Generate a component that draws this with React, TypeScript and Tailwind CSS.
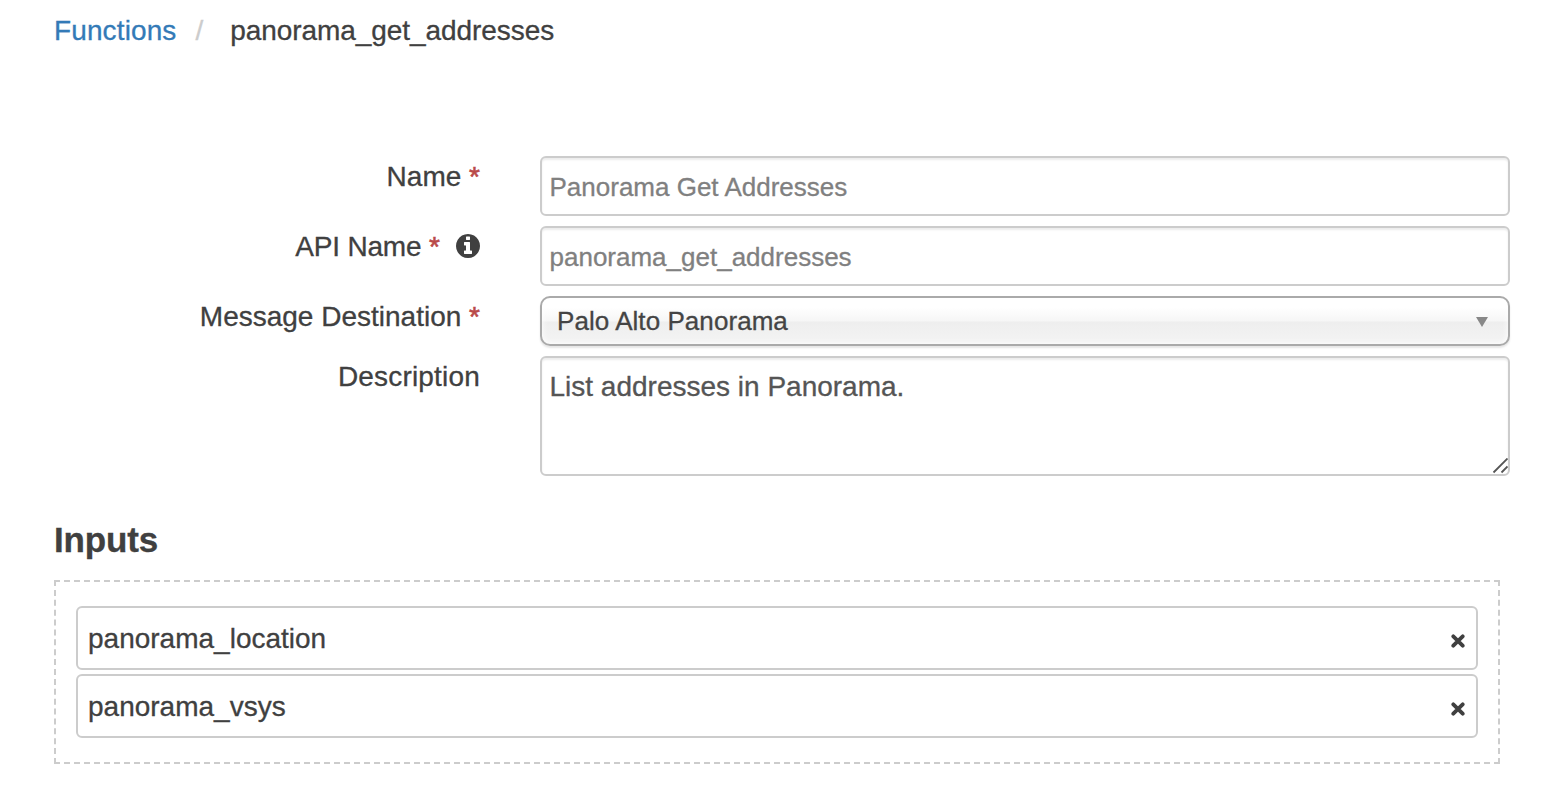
import type { ReactNode } from 'react';

function Required() {
  return <span className="text-[#b94a48] [-webkit-text-stroke:0.6px]">*</span>;
}

function InfoIcon() {
  return (
    <svg className="relative -top-px ml-4 size-6 shrink-0" viewBox="128 128 1536 1536" fill="currentColor" aria-hidden="true">
      <path d="M1152 1376v-160q0-14-9-23t-23-9h-96v-512q0-14-9-23t-23-9h-320q-14 0-23 9t-9 23v160q0 14 9 23t23 9h96v320h-96q-14 0-23 9t-9 23v160q0 14 9 23t23 9h448q14 0 23-9t9-23zm-128-896v-160q0-14-9-23t-23-9h-192q-14 0-23 9t-9 23v160q0 14 9 23t23 9h192q14 0 23-9t9-23zm640 416q0 209-103 385.5t-279.5 279.5-385.5 103-385.5-103-279.5-279.5-103-385.5 103-385.5 279.5-279.5 385.5-103 385.5 103 279.5 279.5 103 385.5z" />
    </svg>
  );
}

function RemoveIcon() {
  return (
    <svg className="size-3.5" viewBox="0 0 14 14" fill="none" stroke="currentColor" strokeWidth="3.8" strokeLinecap="round" aria-hidden="true">
      <path d="M2.3 2.3L11.7 11.7M11.7 2.3L2.3 11.7" />
    </svg>
  );
}

interface RowProps {
  label: string;
  labelClass?: string;
  required?: boolean;
  info?: boolean;
  children: ReactNode;
}

function Row({ label, labelClass = '', required, info, children }: RowProps) {
  return (
    <div className="flex items-start">
      <div className="mr-[60px] flex w-[426px] items-center justify-end pt-px leading-10">
        <span className="whitespace-pre">
          <span className={labelClass}>{label}</span>
          {required && ' '}
          {required && <Required />}
        </span>
        {info && <InfoIcon />}
      </div>
      {children}
    </div>
  );
}

const fieldShadow = 'shadow-[inset_0_2px_2px_rgba(0,0,0,0.075)]';

function TextField({ value }: { value: string }) {
  return (
    <div className={`flex h-[60px] w-[970px] items-center rounded-md border-2 border-[#ccc] px-[7.5px] pt-0.5 text-[26px] text-[#808080] ${fieldShadow}`}>
      {value}
    </div>
  );
}

function InputItem({ name }: { name: string }) {
  return (
    <li className="flex h-16 items-center justify-between rounded-md border-2 border-[#ccc] pr-[11px] pl-2.5">
      <span className="pt-0.5">{name}</span>
      <button type="button" className="mt-1.5" aria-label="Remove">
        <RemoveIcon />
      </button>
    </li>
  );
}

export default function App() {
  return (
    <main className="h-[802px] w-[1552px] overflow-hidden bg-white pt-[11px] pl-[54px] font-['Liberation_Sans',Arial,sans-serif] text-[28px] text-[#404040] [-webkit-text-stroke:0.3px]">
      <nav className="flex leading-10">
        <a className="tracking-[0.12px] text-[#337ab7]">Functions</a>
        <span className="ml-[19px] text-[#ccc]">/</span>
        <span className="ml-[27px] tracking-[-0.07px]">panorama_get_addresses</span>
      </nav>

      <form className="mt-[105px] flex flex-col gap-2.5">
        <Row label="Name" required>
          <TextField value="Panorama Get Addresses" />
        </Row>
        <Row label="API Name" labelClass="tracking-[-0.2px]" required info>
          <TextField value="panorama_get_addresses" />
        </Row>
        <Row label="Message Destination" required>
          <div className="flex h-[50px] w-[970px] items-center justify-between rounded-[10px] border-2 border-[#aaa] bg-[linear-gradient(to_bottom,#fff_20%,#f6f6f6_50%,#eee_52%,#f4f4f4_100%)] pr-5 pl-[15px] text-[26px] text-[#444] shadow-[inset_0_0_6px_white,0_2px_2px_rgba(0,0,0,0.1)]">
            <span className="tracking-[0.06px]">Palo Alto Panorama</span>
            <svg className="mt-0.5 h-2.5 w-3" viewBox="0 0 12 10" fill="#888" aria-hidden="true">
              <path d="M0 0H12L6 10Z" />
            </svg>
          </div>
        </Row>
        <Row label="Description" labelClass="tracking-[0.18px]">
          <div className={`flex h-[120px] w-[970px] justify-between rounded-md border-2 border-[#ccc] pt-[9px] pl-[7.5px] leading-10 text-[#555] ${fieldShadow}`}>
            <span>List addresses in Panorama.</span>
            <svg className="size-4 self-end" viewBox="0 0 16 16" fill="none" stroke="#555" strokeWidth="1.8" aria-hidden="true">
              <path d="M1.5 14.5L15.5 0.5M9.5 14.5L15.5 8.5" />
            </svg>
          </div>
        </Row>
      </form>

      <h2 className="mt-11 text-[35px] leading-10 font-bold tracking-[-0.15px]">Inputs</h2>
      <ul className="mt-5 flex h-[184px] w-[1446px] flex-col gap-1 border-2 border-dashed border-[#ccc] px-5 pt-6">
        <InputItem name="panorama_location" />
        <InputItem name="panorama_vsys" />
      </ul>
    </main>
  );
}
